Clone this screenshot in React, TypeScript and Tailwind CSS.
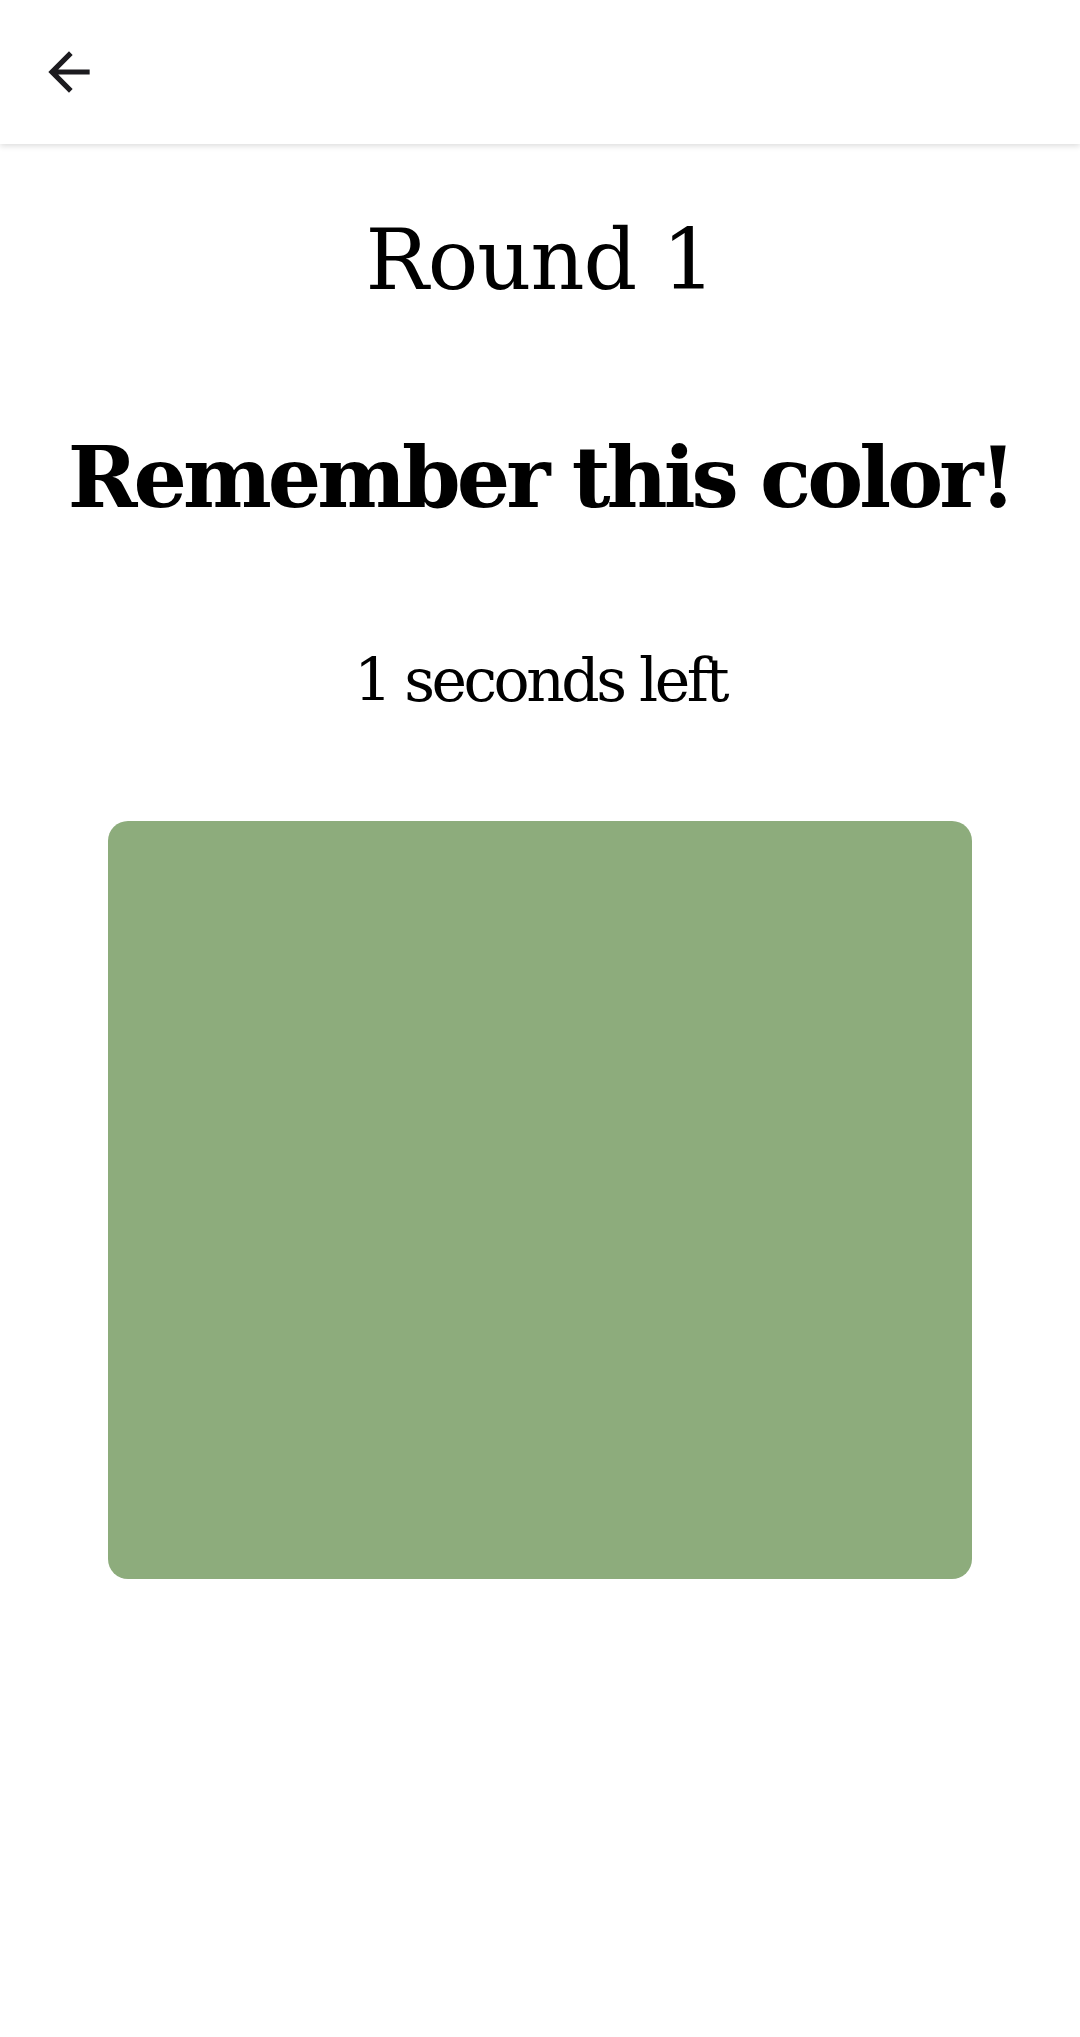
const serif = { fontFamily: '"DejaVu Serif", "Liberation Serif", serif' }

function BackArrow() {
  return (
    <svg viewBox="0 0 24 24" className="h-[62px] w-[62px]" fill="currentColor">
      <path d="M20 11H7.83l5.59-5.59L12 4l-8 8 8 8 1.41-1.41L7.83 13H20v-2z" />
    </svg>
  )
}

export default function App() {
  return (
    <div className="min-h-[2037px] w-[1080px] bg-white text-black" style={serif}>
      <header className="flex h-[144px] items-center bg-white pl-[38px] shadow-[0_2px_6px_rgba(0,0,0,0.14)]">
        <button className="flex items-center justify-center text-[#1c1b1f]">
          <BackArrow />
        </button>
      </header>

      <main className="flex flex-col items-center">
        <h1 className="mt-[74px] text-[84px] leading-none font-normal tracking-[-1px]">Round 1</h1>
        <h2 className="mt-[134px] text-[84px] leading-none font-bold tracking-[-4px]">Remember this color!</h2>
        <p className="mt-[130px] text-[60px] leading-none tracking-[-3.5px]">1 seconds left</p>
        <div className="mt-[111px] h-[758px] w-[864px] rounded-[20px] bg-[#8dac7c]" />
      </main>
    </div>
  )
}
